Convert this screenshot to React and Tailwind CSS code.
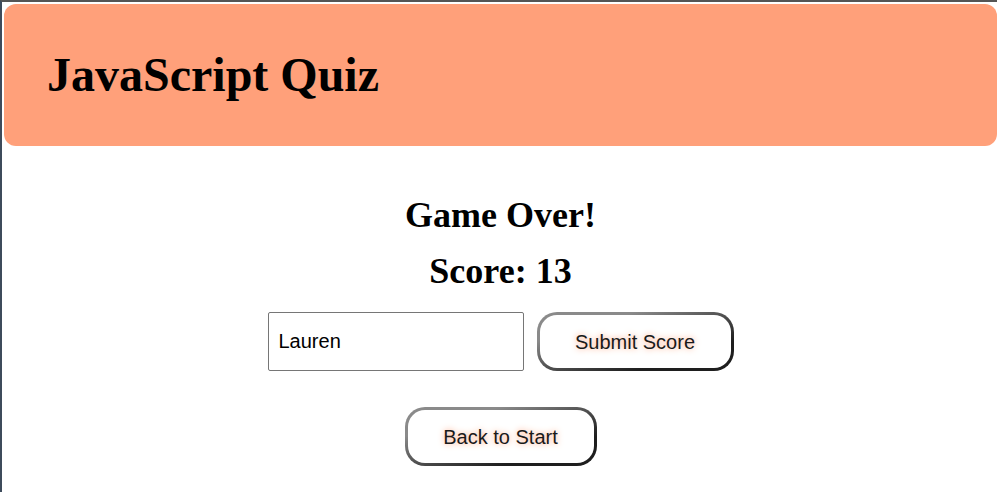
const serif = { fontFamily: '"Liberation Serif", "Times New Roman", serif' };

const PillButton = ({ children, className }) => (
  <button
    className={`rounded-[20px] bg-linear-to-br from-[#8a8a8a] from-25% to-[#1e1e1e] to-75% p-[3px] ${className}`}
  >
    <span className="flex h-full w-full items-center justify-center rounded-[17px] bg-white text-[20px] text-[#1a1a1a] [font-family:'Liberation_Sans',Arial,sans-serif] [text-shadow:0_0_6px_#ffa07a]">
      {children}
    </span>
  </button>
);

const App = () => {
  return (
    <div className="min-h-screen w-full border-t-2 border-l-2 border-t-[#555] border-l-[#3d4b5b] bg-white">
      <header className="mt-[2px] ml-[2px] flex h-[142px] items-center rounded-xl bg-[#ffa07a] pl-[43px]">
        <h1 style={serif} className="text-[48px] leading-none font-bold text-black">
          JavaScript Quiz
        </h1>
      </header>

      <main className="flex flex-col items-center pt-[49px] pl-[2px]">
        <h2 style={serif} className="text-[36px] leading-[40px] font-bold text-black">Game Over!</h2>
        <h2 style={serif} className="mt-4 text-[36px] leading-[40px] font-bold text-black">Score: 13</h2>

        <div className="mt-[21px] flex items-center gap-[13px]">
          <input
            defaultValue="Lauren"
            className="h-[59px] w-[256px] rounded-[2px] border border-[#767676] bg-white px-[10px] text-[20px] text-black outline-none [font-family:'Liberation_Sans',Arial,sans-serif]"
          />
          <PillButton className="h-[59px] w-[197px]">Submit Score</PillButton>
        </div>

        <PillButton className="mt-[36px] h-[59px] w-[192px]">Back to Start</PillButton>
      </main>
    </div>
  );
};

export default App;
